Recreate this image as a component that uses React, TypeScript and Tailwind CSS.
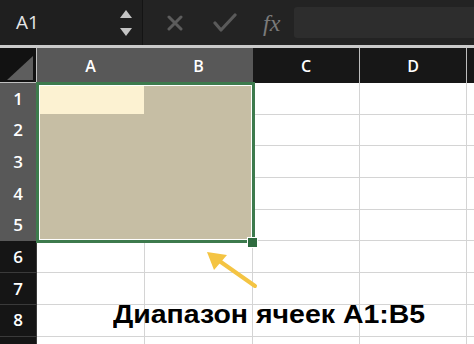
import React from "react";

const COLS = [108, 108, 107, 107, 60];
const LETTERS = ["A", "B", "C", "D", ""];
const ROWH = 31.7;

export default function App() {
  const rows = [1, 2, 3, 4, 5, 6, 7, 8, 9];
  return (
    <div
      className="relative w-[474px] h-[344px] overflow-hidden bg-white"
      style={{ fontFamily: '"Open Sans", "Liberation Sans", sans-serif' }}
    >
      {/* Toolbar */}
      <div className="flex h-[45px] bg-[#232323]">
        <div className="flex w-[142px] shrink-0 items-center justify-between bg-[#1f1f1f] pl-[16px] pr-[9px]">
          <span className="text-[19px] text-[#e6e6e6] leading-none">A1</span>
          <svg width="14" height="28" viewBox="0 0 14 28">
            <polygon points="7,1 13,9 1,9" fill="#c4c4c4" />
            <polygon points="1,19 13,19 7,27" fill="#c4c4c4" />
          </svg>
        </div>
        <div className="w-[1px] shrink-0 bg-[#141414]" />
        <div className="flex flex-1 items-center">
          <svg width="16" height="16" viewBox="0 0 16 16" className="ml-[24px]">
            <path d="M2 2 L14 14 M14 2 L2 14" stroke="#5c5c5c" strokeWidth="3" strokeLinecap="round" />
          </svg>
          <svg width="24" height="20" viewBox="0 0 24 20" className="ml-[30px]">
            <path d="M2 10 L8 17 L22 2" stroke="#5a5a5a" strokeWidth="3.2" fill="none" strokeLinecap="round" strokeLinejoin="round" />
          </svg>
          <span
            className="ml-[26px] text-[24px] italic text-[#7a7a7a] leading-none"
            style={{ fontFamily: '"Liberation Serif", "DejaVu Serif", serif' }}
          >
            fx
          </span>
          <div className="ml-[14px] h-[31px] flex-1 rounded-l-[3px] bg-[#2d2d2d]" />
        </div>
      </div>
      <div className="h-[3px] bg-[#cacaca]" />

      {/* Header row */}
      <div className="flex h-[35px] bg-[#161616]">
        <div className="relative w-[37px] shrink-0 border-r border-b border-[#c0c0c0] bg-[#121212]">
          <svg className="absolute left-[7px] top-[8px]" width="26" height="24" viewBox="0 0 26 24">
            <polygon points="26,0 26,24 0,24" fill="#5e5e5e" />
          </svg>
        </div>
        {COLS.map((w, i) => (
          <div
            key={i}
            style={{ width: w }}
            className={`flex shrink-0 items-center justify-center border-r text-[16px] font-semibold text-white ${
              i < 2 ? "bg-[#585858] border-[#585858]" : "bg-[#171717] border-[#bdbdbd]"
            }`}
          >
            {LETTERS[i]}
          </div>
        ))}
      </div>

      {/* Rows */}
      {rows.map((r) => {
        const sel = r <= 5;
        return (
          <div key={r} className="flex" style={{ height: ROWH }}>
            <div
              className={`flex w-[37px] shrink-0 items-center justify-center border-r border-b text-[17px] font-semibold text-white ${
                sel ? "bg-[#585858] border-[#585858]" : "bg-[#151515] border-[#3a3a3a]"
              }`}
            >
              {r < 9 ? r : ""}
            </div>
            {COLS.map((w, i) => {
              const inSel = sel && i < 2;
              const bg = inSel ? (r === 1 && i === 0 ? "bg-[#fcf2d2]" : "bg-[#c6bea4]") : "bg-white";
              return (
                <div
                  key={i}
                  style={{ width: w }}
                  className={`shrink-0 border-r border-b ${inSel ? "border-[#c6bea4]" : "border-[#d4d4d4]"} ${bg}`}
                />
              );
            })}
          </div>
        );
      })}

      {/* Selection border */}
      <div className="absolute left-[36px] top-[82px] h-[161px] w-[219px] border-[3px] border-[#3d7a4d] shadow-[inset_0_0_0_1px_#ffffff]" />
      <div className="absolute left-[248px] top-[238px] h-[9px] w-[9px] bg-[#2f6b3f] outline outline-1 outline-white" />

      {/* Arrow */}
      <svg className="absolute left-0 top-0" width="474" height="344" viewBox="0 0 474 344">
        <line x1="255" y1="286" x2="218" y2="260" stroke="#f4c443" strokeWidth="4" strokeLinecap="round" />
        <polygon points="207,252 227,255 214,270" fill="#f4c443" />
      </svg>

      {/* Label */}
      <div
        className="absolute left-[113px] top-[301px] origin-left scale-x-[1.095] text-[26px] font-bold leading-none text-black whitespace-nowrap"
        style={{ fontFamily: '"Liberation Sans", Arial, sans-serif' }}
      >
        Диапазон ячеек A1:B5
      </div>
    </div>
  );
}
